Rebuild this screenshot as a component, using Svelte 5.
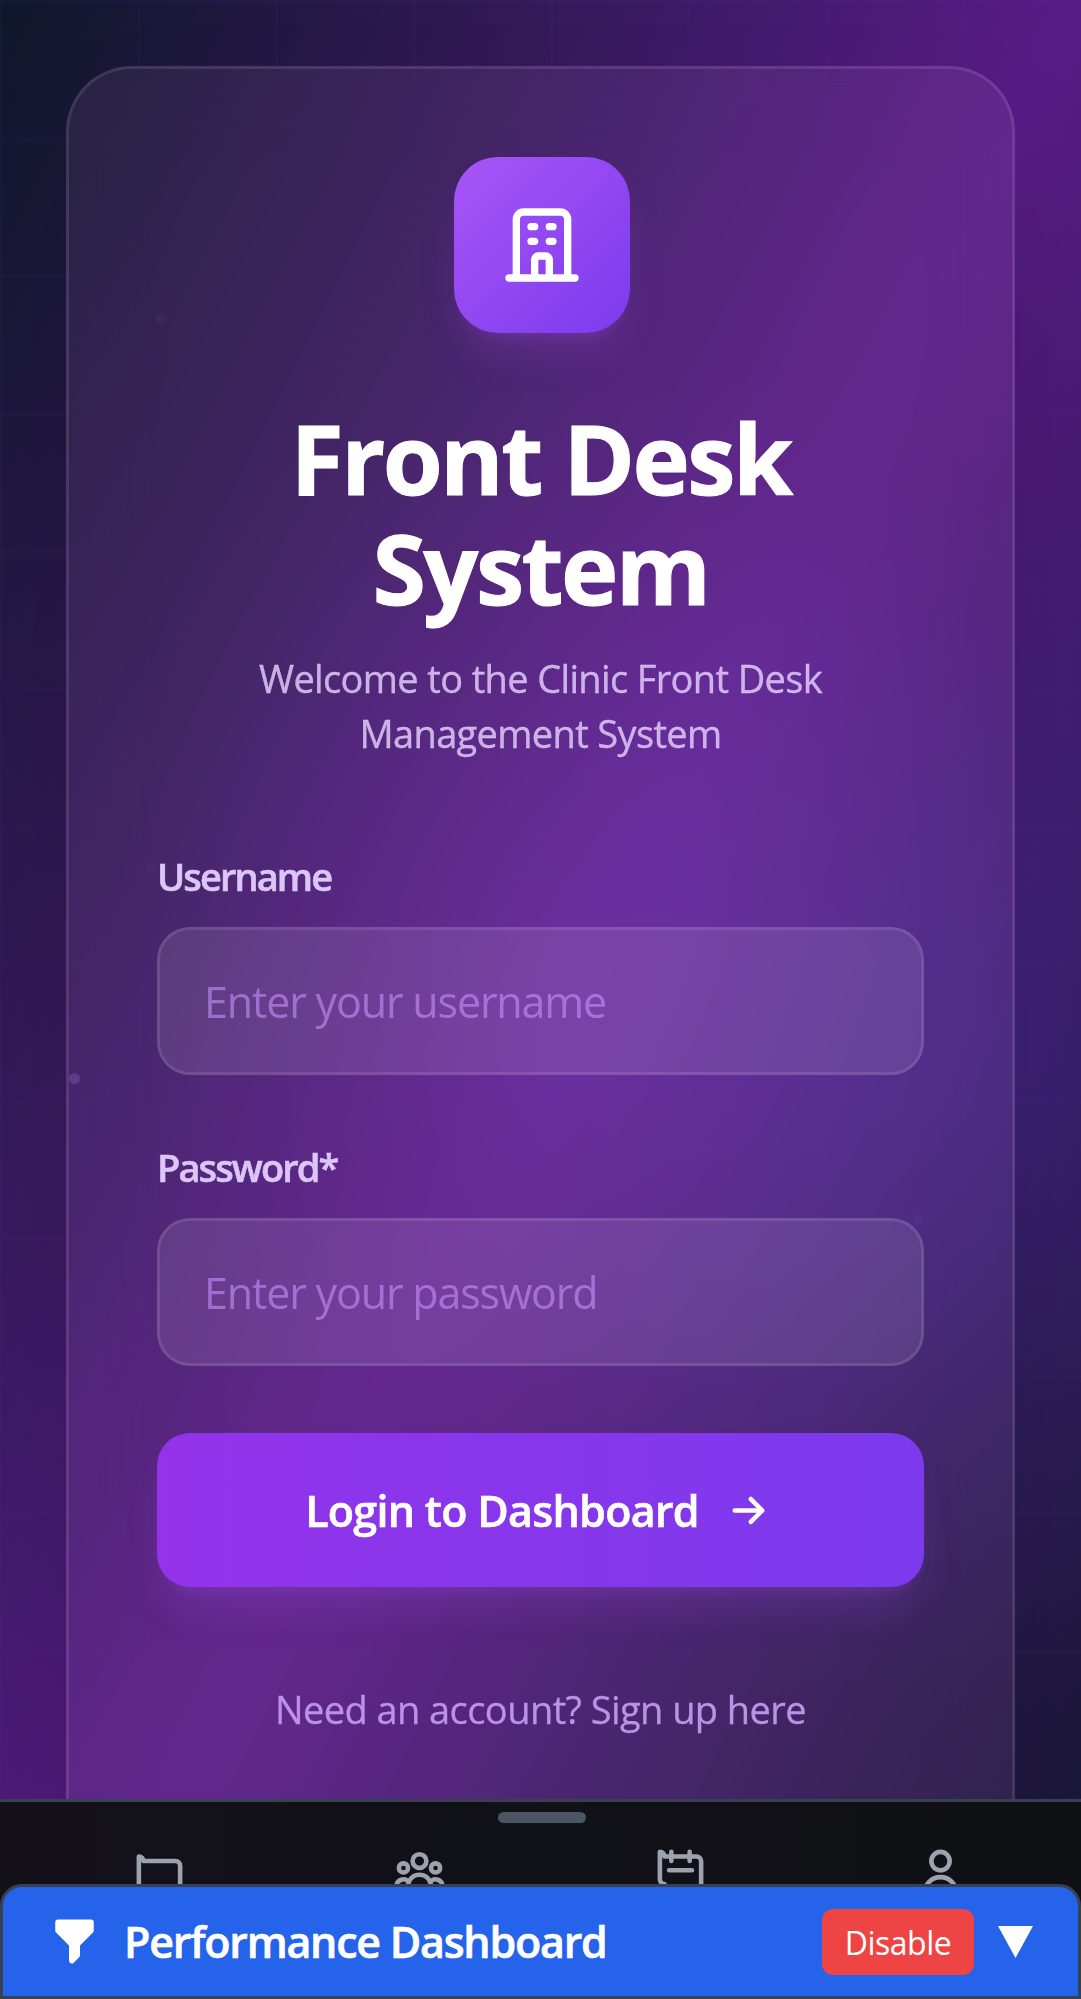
<script>
  let username = $state('');
  let password = $state('');

  const particles = [
    { x: 161, y: 318, o: 0.05 },
    { x: 74, y: 1078, o: 0.22 },
    { x: 151, y: 867, o: 0.04 },
    { x: 918, y: 1219, o: 0.05 }
  ];

  const tabs = [
    'M3 7v10a2 2 0 002 2h14a2 2 0 002-2V9a2 2 0 00-2-2H5a2 2 0 00-2-2z',
    'M17 20h5v-2a3 3 0 00-5.356-1.857M17 20H7m10 0v-2c0-.656-.126-1.283-.356-1.857M7 20H2v-2a3 3 0 015.356-1.857M7 20v-2c0-.656.126-1.283.356-1.857m0 0a5.002 5.002 0 019.288 0M15 7a3 3 0 11-6 0 3 3 0 016 0zm6 3a2 2 0 11-4 0 2 2 0 014 0zM7 10a2 2 0 11-4 0 2 2 0 014 0z',
    'M8 7V3m8 4V3m-9 8h10M5 21h14a2 2 0 002-2V7a2 2 0 00-2-2H5a2 2 0 00-2-2v12a2 2 0 002 2z',
    'M16 7a4 4 0 11-8 0 4 4 0 018 0zM12 14a7 7 0 00-7 7h14a7 7 0 00-7-7z'
  ];
</script>

<div class="page">
  <div class="grid"></div>
  <main class="card">
    <div class="logo">
      <svg viewBox="0 0 24 24"><path d="M19 21V5a2 2 0 00-2-2H7a2 2 0 00-2 2v16m14 0h2m-2 0h-5m-9 0H3m2 0h5M9 7h1m-1 4h1m4-4h1m-1 4h1m-5 10v-5a1 1 0 011-1h2a1 1 0 011 1v5m-4 0h4" /></svg>
    </div>
    <h1>Front Desk System</h1>
    <p class="sub">Welcome to the Clinic Front Desk Management System</p>

    <form onsubmit={(e) => e.preventDefault()}>
      <label for="user">Username</label>
      <input id="user" type="text" placeholder="Enter your username" bind:value={username} />
      <label for="pass">Password*</label>
      <input id="pass" type="password" placeholder="Enter your password" bind:value={password} />
      <button class="login" type="submit">
        <span>Login to Dashboard</span>
        <svg viewBox="0 0 24 24"><path d="M13 7l5 5m0 0l-5 5m5-5H6" /></svg>
      </button>
    </form>
    <a class="signup" href="#signup">Need an account? Sign up here</a>
  </main>
  {#each particles as p}
    <span class="particle" style="left: {p.x}px; top: {p.y}px; opacity: {p.o}"></span>
  {/each}

  <nav class="tabbar">
    <div class="handle"></div>
    <div class="tabs">
      {#each tabs as d}
        <svg viewBox="0 0 24 24"><path {d} /></svg>
      {/each}
    </div>
  </nav>

  <section class="perf">
    <svg class="funnel" viewBox="0 0 20 20"><path d="M3 3a1 1 0 011-1h12a1 1 0 011 1v3a1 1 0 01-.293.707L12 11.414V15a1 1 0 01-.293.707l-2 2A1 1 0 018 17v-5.586L3.293 6.707A1 1 0 013 6V3z" /></svg>
    <span class="ptitle">Performance Dashboard</span>
    <button class="disable"><span>Disable</span></button>
    <svg class="tri" viewBox="0 0 35 32"><path d="M0 0H35L17.5 32Z" /></svg>
  </section>
</div>

<style>
  :global(body) { background: #0f172a; }
  * { box-sizing: border-box; }
  svg { display: block; flex: none; fill: none; stroke: currentColor; stroke-width: 2; stroke-linecap: round; stroke-linejoin: round; }
  .page {
    position: relative;
    height: 1999px;
    overflow: hidden;
    padding: 66px 66px 0;
    font-family: 'Segoe UI', 'Open Sans', 'Noto Sans', sans-serif;
    background:
      radial-gradient(ellipse 480px 620px at 600px 980px, rgba(126, 58, 200, 0.26), rgba(126, 58, 200, 0.13) 50%, transparent) no-repeat,
      radial-gradient(ellipse 500px 620px at 930px 1080px, rgba(79, 70, 229, 0.18), rgba(79, 70, 229, 0.09) 50%, transparent) no-repeat,
      linear-gradient(to bottom right, #0f172a, #581c87 50%, #0f172a) 0 0 / 100% 2160px no-repeat;
  }
  .grid {
    position: absolute;
    inset: 0;
    background-image:
      linear-gradient(rgba(99, 60, 241, 0.045) 2.75px, transparent 2.75px),
      linear-gradient(90deg, rgba(99, 60, 241, 0.045) 2.75px, transparent 2.75px);
    background-size: 137.5px 137.5px;
  }
  .particle { position: absolute; width: 11px; height: 11px; margin: -5.5px; border-radius: 50%; background: #a78bfa; }
  .card {
    position: relative;
    height: 1900px;
    padding: 88px;
    border: 3px solid rgba(255, 255, 255, 0.1);
    border-radius: 66px;
    background: rgba(255, 190, 255, 0.07);
    box-shadow: 0 69px 138px -33px rgba(0, 0, 0, 0.25);
    backdrop-filter: blur(44px);
    text-align: center;
  }
  .logo {
    display: grid;
    place-items: center;
    width: 176px;
    height: 176px;
    margin: 0 auto;
    border-radius: 44px;
    color: #fff;
    background: linear-gradient(to bottom right, #a855f7, #7c3aed);
    box-shadow: 0 27px 41px -8px rgba(168, 85, 247, 0.2), 0 11px 16px -11px rgba(168, 85, 247, 0.25);
    position: relative;
    left: 1px;
  }
  .logo svg { width: 88px; height: 88px; }
  h1 { margin: 69px auto 0; width: 520px; font-size: 97px; line-height: 110px; font-weight: 700; letter-spacing: -2.6px; color: #fff; -webkit-text-stroke: 1px #fff; }
  .sub { margin: 29px auto 0; width: 620px; font-size: 38px; line-height: 55px; letter-spacing: -0.64px; color: rgba(233, 213, 255, 0.8); -webkit-text-stroke: 0.3px rgba(233, 213, 255, 0.8); }
  form { display: flex; flex-direction: column; margin-top: 89px; text-align: left; }
  label { height: 55px; font-size: 38px; line-height: 53px; font-weight: 600; font-stretch: 94%; letter-spacing: -1.9px; color: #dcc6f8; -webkit-text-stroke: 0.6px #dcc6f8; margin-bottom: 22px; }
  input {
    height: 148px;
    margin: 0 0 66px;
    padding: 0 44px;
    border: 3px solid rgba(255, 255, 255, 0.1);
    border-radius: 33px;
    background: rgba(255, 255, 255, 0.1);
    font: 400 43px 'Segoe UI', 'Open Sans', 'Noto Sans', sans-serif;
    letter-spacing: -1.15px;
    color: #fff;
    outline: none;
  }
  input::placeholder { color: rgba(196, 142, 250, 0.62); opacity: 1; }
  .login {
    display: flex;
    align-items: center;
    justify-content: center;
    gap: 22px;
    height: 154px;
    margin-top: 1px;
    border: 0;
    border-radius: 33px;
    background: linear-gradient(to right, #9333ea, #7c3aed);
    box-shadow: 0 27px 41px -8px rgba(168, 85, 247, 0.2), 0 11px 16px -11px rgba(168, 85, 247, 0.25);
    font: 600 43px 'Segoe UI', 'Open Sans', 'Noto Sans', sans-serif;
    letter-spacing: -0.7px;
    color: #fff;
    -webkit-text-stroke: 0.6px #fff;
  }
  .login svg { width: 55px; height: 55px; }
  .signup { display: block; margin-top: 95px; font-size: 38px; line-height: 55px; letter-spacing: -0.57px; color: #bb92e6; -webkit-text-stroke: 0.3px #bb92e6; text-decoration: none; white-space: nowrap; }
  .tabbar {
    position: absolute;
    left: 0;
    right: 0;
    top: 1799px;
    height: 200px;
    border-top: 3px solid #374151;
    background: linear-gradient(to right, #13101a, #111118 50%, #101114);
    color: #9ca3af;
  }
  .handle { position: relative; left: 1px; width: 88px; height: 11px; margin: 10px auto 22px; border-radius: 6px; background: #4b5563; }
  .tabs { display: grid; grid-template-columns: repeat(4, 1fr); justify-items: center; padding: 0 10px 0 29px; }
  .tabs svg { width: 55px; height: 55px; }
  .perf {
    position: absolute;
    left: 0;
    right: 0;
    bottom: 0;
    display: flex;
    align-items: center;
    height: 115px;
    padding: 0 45px 0 44px;
    border: 3px solid #374151;
    border-radius: 22px 22px 0 0;
    background: #2563eb;
    color: #fff;
  }
  .funnel { width: 55px; height: 55px; fill: currentColor; stroke: none; }
  .ptitle { flex: 1; margin-left: 22px; font-size: 43px; font-weight: 600; letter-spacing: -1.25px; white-space: nowrap; -webkit-text-stroke: 0.6px #fff; }
  .disable { width: 152px; height: 66px; border: 0; border-radius: 11px; padding: 2px 0 0; background: #ef4444; color: #fff; font: 400 32px 'Segoe UI', 'Open Sans', 'Noto Sans', sans-serif; letter-spacing: -0.5px; }
  .tri { width: 35px; height: 32px; margin-left: 24px; fill: currentColor; stroke: none; }
</style>
